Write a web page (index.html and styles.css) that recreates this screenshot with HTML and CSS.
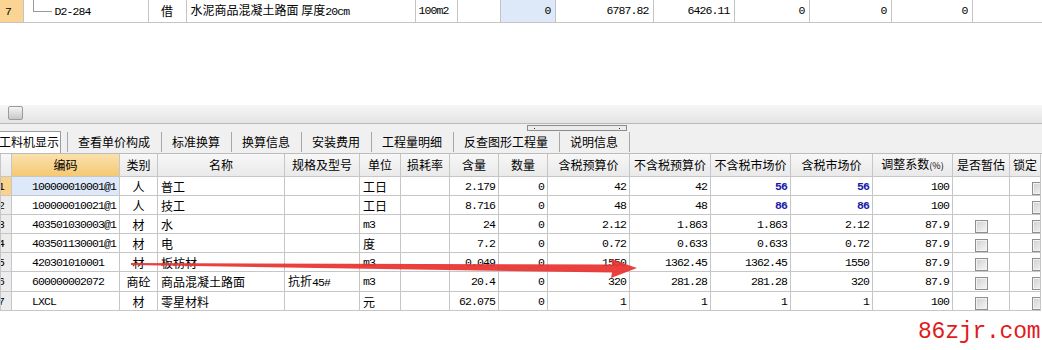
FILE: index.html
```html
<!DOCTYPE html>
<html lang="zh-CN">
<head>
    <meta charset="UTF-8">
    <title>工料机显示</title>
    <link rel="stylesheet" href="styles.css">
</head>
<body>

<table class="top-grid">
    <colgroup>
        <col style="width:23px"><col style="width:125px"><col style="width:38px"><col style="width:229px">
        <col style="width:42px"><col style="width:43px"><col style="width:55px"><col style="width:98px">
        <col style="width:81px"><col style="width:75px"><col style="width:82px"><col style="width:81px">
        <col style="width:70px">
    </colgroup>
    <tr>
        <td class="rownum sel"><span class="m">7</span></td>
        <td class="tree"><span class="branch"></span><span class="m">D2-284</span></td>
        <td class="c">借</td>
        <td>水泥商品混凝土路面 厚度<span class="m">20cm</span></td>
        <td class="m">100m2</td>
        <td></td>
        <td class="m r cur">0</td>
        <td class="m r">6787.82</td>
        <td class="m r">6426.11</td>
        <td class="m r">0</td>
        <td class="m r">0</td>
        <td class="m r">0</td>
        <td></td>
    </tr>
</table>

<div class="blank"></div>

<div class="splitter"><span class="split-btn"></span></div>

<div class="tabbar">
    <div class="tab active">工料机显示</div>
    <div class="tab">查看单价构成</div>
    <div class="tab">标准换算</div>
    <div class="tab">换算信息</div>
    <div class="tab">安装费用</div>
    <div class="tab">工程量明细</div>
    <div class="tab">反查图形工程量</div>
    <div class="tab last">说明信息</div>
    <span class="thumb"><i></i><i></i></span>
</div>

<table class="grid">
    <colgroup>
        <col style="width:11px"><col style="width:108px"><col style="width:38px"><col style="width:127px">
        <col style="width:75px"><col style="width:41px"><col style="width:49px"><col style="width:49px">
        <col style="width:49px"><col style="width:82px"><col style="width:81px"><col style="width:80px">
        <col style="width:82px"><col style="width:80px"><col style="width:57px"><col style="width:31px">
    </colgroup>
    <thead>
        <tr>
            <th class="rownum"></th>
            <th class="hot">编码</th>
            <th>类别</th>
            <th>名称</th>
            <th>规格及型号</th>
            <th>单位</th>
            <th>损耗率</th>
            <th>含量</th>
            <th>数量</th>
            <th>含税预算价</th>
            <th>不含税预算价</th>
            <th>不含税市场价</th>
            <th>含税市场价</th>
            <th>调整系数<span class="pct">(%)</span></th>
            <th>是否暂估</th>
            <th class="lock">锁定</th>
        </tr>
    </thead>
    <tbody>
        <tr>
            <td class="rownum sel m">1</td>
            <td class="code m cur">100000010001@1</td>
            <td class="c">人</td>
            <td>普工</td>
            <td></td>
            <td>工日</td>
            <td></td>
            <td class="m r">2.179</td>
            <td class="m r">0</td>
            <td class="m r">42</td>
            <td class="m r">42</td>
            <td class="m r blue">56</td>
            <td class="m r blue">56</td>
            <td class="m r">100</td>
            <td></td>
            <td class="lock"><span class="cb"></span></td>
        </tr>
        <tr>
            <td class="rownum m">2</td>
            <td class="code m">100000010021@1</td>
            <td class="c">人</td>
            <td>技工</td>
            <td></td>
            <td>工日</td>
            <td></td>
            <td class="m r">8.716</td>
            <td class="m r">0</td>
            <td class="m r">48</td>
            <td class="m r">48</td>
            <td class="m r blue">86</td>
            <td class="m r blue">86</td>
            <td class="m r">100</td>
            <td></td>
            <td class="lock"><span class="cb"></span></td>
        </tr>
        <tr>
            <td class="rownum m">3</td>
            <td class="code m">403501030003@1</td>
            <td class="c">材</td>
            <td>水</td>
            <td></td>
            <td class="m">m3</td>
            <td></td>
            <td class="m r">24</td>
            <td class="m r">0</td>
            <td class="m r">2.12</td>
            <td class="m r">1.863</td>
            <td class="m r">1.863</td>
            <td class="m r">2.12</td>
            <td class="m r">87.9</td>
            <td class="c"><span class="cb"></span></td>
            <td class="lock"><span class="cb"></span></td>
        </tr>
        <tr>
            <td class="rownum m">4</td>
            <td class="code m">403501130001@1</td>
            <td class="c">材</td>
            <td>电</td>
            <td></td>
            <td>度</td>
            <td></td>
            <td class="m r">7.2</td>
            <td class="m r">0</td>
            <td class="m r">0.72</td>
            <td class="m r">0.633</td>
            <td class="m r">0.633</td>
            <td class="m r">0.72</td>
            <td class="m r">87.9</td>
            <td class="c"><span class="cb"></span></td>
            <td class="lock"><span class="cb"></span></td>
        </tr>
        <tr>
            <td class="rownum m">5</td>
            <td class="code m">420301010001</td>
            <td class="c">材</td>
            <td>板枋材</td>
            <td></td>
            <td class="m">m3</td>
            <td></td>
            <td class="m r">0.049</td>
            <td class="m r">0</td>
            <td class="m r">1550</td>
            <td class="m r">1362.45</td>
            <td class="m r">1362.45</td>
            <td class="m r">1550</td>
            <td class="m r">87.9</td>
            <td class="c"><span class="cb"></span></td>
            <td class="lock"><span class="cb"></span></td>
        </tr>
        <tr>
            <td class="rownum m">6</td>
            <td class="code m">600000002072</td>
            <td class="c">商砼</td>
            <td>商品混凝土路面</td>
            <td>抗折<span class="m">45#</span></td>
            <td class="m">m3</td>
            <td></td>
            <td class="m r">20.4</td>
            <td class="m r">0</td>
            <td class="m r">320</td>
            <td class="m r">281.28</td>
            <td class="m r">281.28</td>
            <td class="m r">320</td>
            <td class="m r">87.9</td>
            <td class="c"><span class="cb"></span></td>
            <td class="lock"><span class="cb"></span></td>
        </tr>
        <tr>
            <td class="rownum m">7</td>
            <td class="code m">LXCL</td>
            <td class="c">材</td>
            <td>零星材料</td>
            <td></td>
            <td>元</td>
            <td></td>
            <td class="m r">62.075</td>
            <td class="m r">0</td>
            <td class="m r">1</td>
            <td class="m r">1</td>
            <td class="m r">1</td>
            <td class="m r">1</td>
            <td class="m r">100</td>
            <td class="c"><span class="cb"></span></td>
            <td class="lock"><span class="cb"></span></td>
        </tr>
    </tbody>
</table>

<!-- red arrow drawn over the grid -->
<svg class="arrow" width="1042" height="350" viewBox="0 0 1042 350">
    <polygon points="131,263 612,264.5 611,259 637,268 611,278 612,272.5 131,265" fill="#e8312f" fill-opacity="0.92"/>
</svg>

<div class="mark">86zjr.com</div>

</body>
</html>
```

FILE: styles.css
```css
body {
    margin: 0;
    width: 1042px;
    height: 350px;
    overflow: hidden;
    position: relative;
    background-color: #fff;
    color: #000;
    font-family: "Noto Sans CJK SC", sans-serif;
    font-size: 12px;
}
table {
    border-collapse: collapse;
    table-layout: fixed;
}
td, th {
    padding: 0 3px;
    line-height: 17px;
    white-space: nowrap;
    overflow: hidden;
    font-weight: normal;
}
.m {
    font-family: "Liberation Mono", monospace;
    font-size: 11.5px;
    letter-spacing: -0.9px;
}
.r {
    text-align: right;
}
.c {
    text-align: center;
}
.blue {
    color: #1a1aa8;
    font-weight: bold;
}
.cur {
    background-color: #dde9f9;
}

/* upper grid, only its last row is visible */
.top-grid {
    width: 1042px;
}
.top-grid tr {
    height: 22px;
}
.top-grid td {
    border-right: 1px solid #c4c4c4;
    border-bottom: 1px solid #c4c4c4;
}
.top-grid .rownum {
    background-color: #fbd493;
    padding-left: 5px;
}
.top-grid td.r {
    padding-right: 4px;
}
.tree {
    padding-left: 9px;
}
.branch {
    display: inline-block;
    width: 18px;
    height: 12px;
    margin-top: -12px;
    margin-right: 3px;
    vertical-align: middle;
    border-left: 1px solid #9a9a9a;
    border-bottom: 1px solid #9a9a9a;
}
.top-grid td:nth-child(4) {
    padding-left: 4px;
}

.blank {
    height: 82px;
}

.splitter {
    height: 18px;
    border-bottom: 1px solid #b9b9b9;
    background: linear-gradient(#f6f6f6, #e4e4e4);
    padding-left: 8px;
}
.split-btn {
    display: inline-block;
    width: 13px;
    height: 12px;
    margin-top: 1px;
    border: 1px solid #9b9b9b;
    border-radius: 2px;
    background: linear-gradient(#f4f4f4, #c8c8c8);
}

.tabbar {
    position: relative;
    height: 29px;
    background-color: #f0f0f0;
    display: flex;
    align-items: flex-end;
    border-bottom: 1px solid #bcbcbc;
}
.tab {
    height: 20px;
    line-height: 20px;
    padding: 0 11px 0 10px;
    border-left: 1px solid #a8a8a8;
    margin-bottom: 1px;
}
.tab.last {
    border-right: 1px solid #a8a8a8;
}
.tab.active {
    margin-left: -11px;
    margin-right: 6px;
    margin-bottom: 0;
    padding: 0 1px 0 9px;
    height: 21px;
    border: 1px solid #9c9c9c;
    border-bottom: none;
    background-color: #fff;
}
.thumb {
    position: absolute;
    left: 527px;
    top: 1px;
    width: 98px;
    height: 4px;
    border: 1px solid #8c8c8c;
    background-color: #ececec;
}
.thumb i {
    position: absolute;
    top: 2px;
    width: 1px;
    height: 1px;
    background-color: #333;
}
.thumb i:first-child {
    left: 6px;
}
.thumb i:last-child {
    right: 6px;
}

/* lower grid */
.grid {
    width: 1040px;
    border-right: 1px solid #b5b5b5;
}
.grid thead tr {
    height: 23px;
}
.grid tbody tr {
    height: 19px;
}
.grid th {
    background: linear-gradient(#f7f7f7, #e9e9e9);
    border: 1px solid #c6c6c6;
    border-top: none;
    text-align: center;
    padding: 0 1px;
}
.grid th.hot {
    background: linear-gradient(#fae1ad, #f5c872);
}
.grid th.lock {
    text-align: left;
    padding-left: 3px;
}
.pct {
    font-size: 9px;
}
.grid td {
    border: 1px solid #c6c6c6;
}
.grid td.r {
    padding-right: 3px;
}
.grid .rownum {
    background-color: #ececec;
    padding: 0;
    text-indent: -3px;
}
.grid .rownum.sel {
    background-color: #fad28a;
}
.grid .code {
    padding-left: 20px;
}
.cb {
    display: inline-block;
    width: 11px;
    height: 11px;
    vertical-align: middle;
    border: 1px solid #8e8e8e;
    background: linear-gradient(135deg, #cfcfcf, #f7f7f7);
    box-shadow: inset 0 0 0 1px #f2f2f2;
}
.grid td.lock {
    padding-left: 22px;
}

.arrow {
    position: absolute;
    left: 0;
    top: 0;
    pointer-events: none;
}
.mark {
    position: absolute;
    left: 918px;
    top: 319px;
    color: #e01b1b;
    font-family: "Liberation Mono", monospace;
    font-size: 23px;
    letter-spacing: -0.2px;
}
```
